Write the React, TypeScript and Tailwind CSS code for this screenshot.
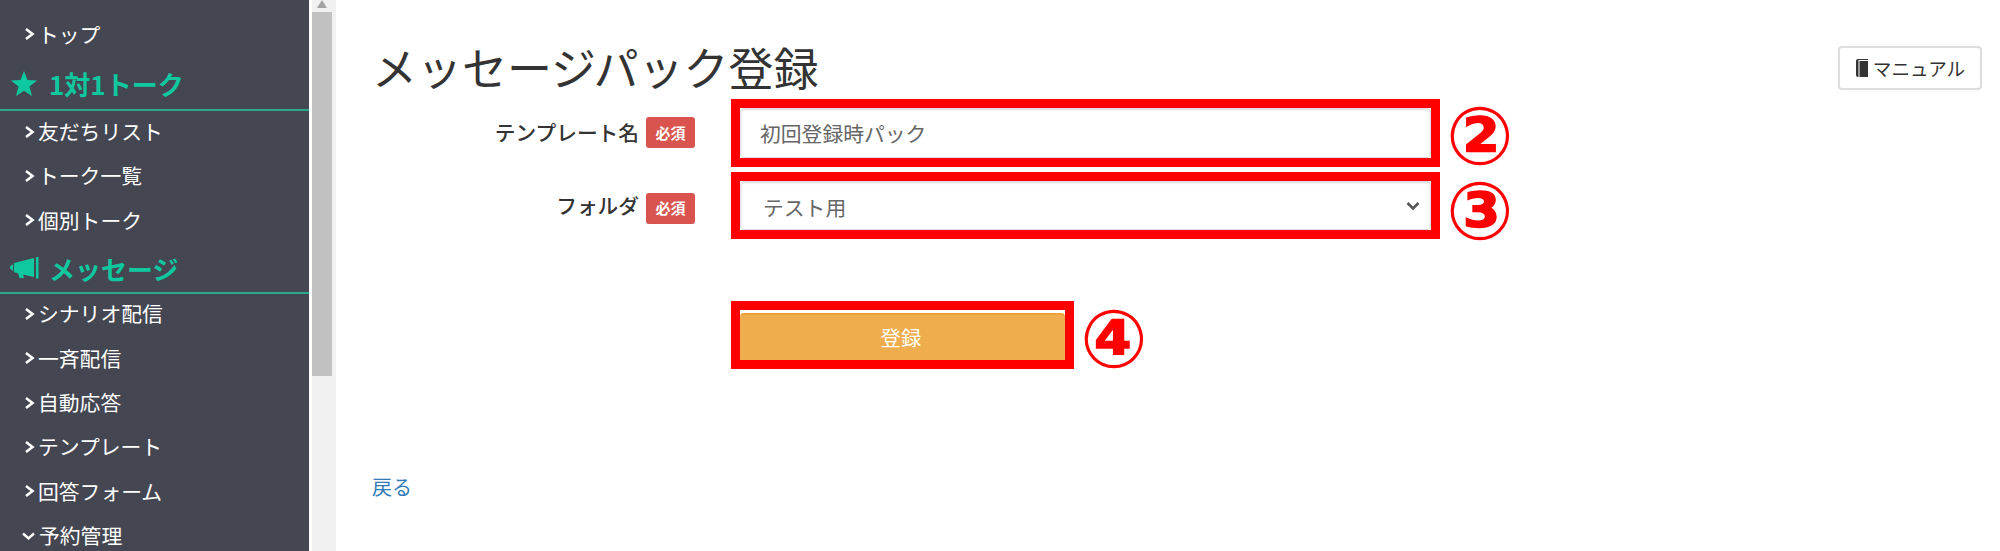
const font = "font-['Noto_Sans_CJK_JP','Noto_Sans',sans-serif]";

function Chevron({ down }: { down?: boolean }) {
  if (down) {
    return (
      <svg width="15" height="10" viewBox="0 0 15 10" className="ml-[-3px] mr-[3px] shrink-0">
        <path d="M2 2.5 L7.5 7.5 L13 2.5" fill="none" stroke="#fff" strokeWidth="2.4" />
      </svg>
    );
  }
  return (
    <svg width="11" height="14" viewBox="0 0 11 14" className="mr-[3px] shrink-0">
      <path d="M2 2 L8.5 7 L2 12" fill="none" stroke="#fff" strokeWidth="2.6" />
    </svg>
  );
}

function NavItem({ label, down }: { label: string; down?: boolean }) {
  return (
    <div className="flex h-[44.4px] items-center pb-[4px] pl-[24px] text-[20.8px] text-white">
      <Chevron down={down} />
      <span>{label}</span>
    </div>
  );
}

function NavHeading({ label, icon, h }: { label: string; icon: React.ReactNode; h: string }) {
  return (
    <div className={`flex items-center border-b-2 border-[#2aa98f] pl-[11px] text-[26px] font-bold text-[#0fc8a0] ${h}`}>
      <span className="flex w-[38px] shrink-0">{icon}</span>
      <span>{label}</span>
    </div>
  );
}

function Badge({ low }: { low?: boolean }) {
  return (
    <span className={`ml-[7px] flex h-[31px] w-[49px] shrink-0 items-center justify-center rounded-[3px] bg-[#d9534f] text-[15px] font-bold text-white ${low ? 'mt-[5px]' : ''}`}>
      必須
    </span>
  );
}

function Marker({ children, mt }: { children: string; mt: string }) {
  return (
    <span className={`ml-[6px] h-[50px] self-start font-['DejaVu_Sans',sans-serif] text-[80px] leading-[60px] font-bold text-[#f00] ${mt}`}>
      {children}
    </span>
  );
}

export default function App() {
  return (
    <div className={`flex h-[551px] w-[2000px] overflow-hidden bg-white ${font}`}>
      <aside className="h-full w-[309px] shrink-0 bg-[#444652] pt-[14px]">
        <NavItem label="トップ" />
        <NavHeading
          label="1対1トーク"
          h="h-[53px]"
          icon={
            <svg width="26" height="25" viewBox="0 0 26 25">
              <polygon fill="#0fc8a0" points="13,0 16.5,9 26,9.5 18.5,15.5 21,25 13,19.7 5,25 7.5,15.5 0,9.5 9.5,9" />
            </svg>
          }
        />
        <NavItem label="友だちリスト" />
        <NavItem label="トーク一覧" />
        <NavItem label="個別トーク" />
        <NavHeading
          label="メッセージ"
          h="h-[49px]"
          icon={
            <svg width="29" height="22" viewBox="0 0 29 22" className="-ml-[1px]">
              <path fill="#0fc8a0" d="M0 9.5 L3 7 V14 L0 11.5 Z M4 6 L24 1 V20 L13 17.5 L14 21 H9.5 L8 16.2 L4 15.2 Z M26 0 H28.5 V21.5 H26 Z" />
            </svg>
          }
        />
        <NavItem label="シナリオ配信" />
        <NavItem label="一斉配信" />
        <NavItem label="自動応答" />
        <NavItem label="テンプレート" />
        <NavItem label="回答フォーム" />
        <NavItem label="予約管理" down />
      </aside>

      <div className="ml-[3px] flex h-full w-[24px] shrink-0 flex-col bg-[#f1f1f1]">
        <div className="flex h-[12px] w-[20px] justify-center">
          <svg width="12" height="8" viewBox="0 0 12 8">
            <polygon fill="#a3a3a3" points="6,0 11,8 1,8" />
          </svg>
        </div>
        <div className="h-[364px] w-[20px] bg-[#c1c1c1]" />
      </div>

      <main className="min-w-0 flex-1 pt-[39px] pr-[18px] pl-[36px]">
        <div className="flex items-start justify-between">
          <h1 className="h-[60px] text-[45px] leading-[55px] font-normal text-[#333]">
            メッセージパック登録
          </h1>
          <button className="mt-[7px] flex h-[44px] w-[144px] items-center justify-center rounded-[4px] border-2 border-[#ddd] bg-white text-[18.6px] text-[#333]">
            <svg width="14" height="18" viewBox="0 0 14 18" className="mr-[4px]">
              <path fill="#333" d="M1 2 Q1 0 3 0 H13 V1 H3.5 V18 H3 Q1 18 1 16 Z M4.5 2 H13 V18 H4.5 Z" />
            </svg>
            マニュアル
          </button>
        </div>

        <div className="flex items-center">
          <label className="flex w-[323px] items-center justify-end text-[20.7px] font-medium text-[#333]">
            テンプレート名
            <Badge />
          </label>
          <div className="ml-[36px] h-[68px] w-[709px] border-[9px] border-[#f00] bg-white">
            <input
              readOnly
              value="初回登録時パック"
              className="h-full w-full rounded-[4px] border border-[#ddd] bg-white px-[19px] text-[20.8px] text-[#666] shadow-[inset_0_1px_2px_rgba(0,0,0,0.15)] outline-none"
            />
          </div>
          <Marker mt="mt-[8px]">②</Marker>
        </div>

        <div className="mt-[5px] flex items-center">
          <label className="flex w-[323px] items-center justify-end text-[20.7px] font-medium text-[#333]">
            フォルダ
            <Badge low />
          </label>
          <div className="relative ml-[36px] h-[67px] w-[709px] border-[9px] border-[#f00] bg-white">
            <select className="h-full w-full appearance-none rounded-[4px] border border-[#ddd] bg-white pt-[5px] pr-[24px] pl-[22px] text-[20.8px] text-[#666] shadow-[inset_0_1px_2px_rgba(0,0,0,0.15)] outline-none">
              <option>テスト用</option>
            </select>
            <svg width="14" height="10" viewBox="0 0 14 10" className="absolute top-[20px] right-[11px]">
              <path d="M1.5 2 L7 7.5 L12.5 2" fill="none" stroke="#555" strokeWidth="2.6" />
            </svg>
          </div>
          <Marker mt="mt-[10px]">③</Marker>
        </div>

        <div className="mt-[62px] ml-[359px] flex items-center">
          <div className="h-[68px] w-[343px] border-[9px] border-[#f00] bg-white pt-[3px]">
            <button className="h-full w-full rounded-t-[4px] border-t-2 border-[#eea236] bg-[#f0ad4e] pr-[3px] pb-[1px] text-[20.4px] text-white">
              登録
            </button>
          </div>
          <Marker mt="mt-[9px]">④</Marker>
        </div>

        <a className="mt-[103px] block text-[20px] text-[#337ab7]">戻る</a>
      </main>
    </div>
  );
}
